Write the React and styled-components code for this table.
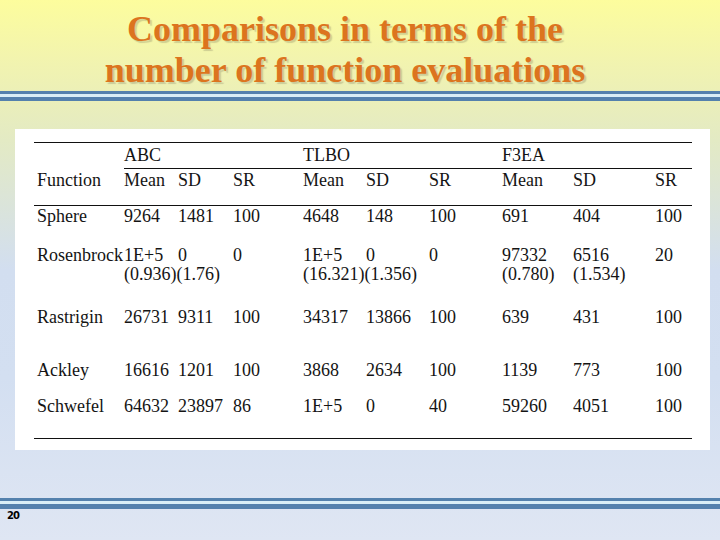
import React from "react";
import styled, { createGlobalStyle } from "styled-components";

const GlobalStyle = createGlobalStyle`
  html, body {
    margin: 0;
    padding: 0;
  }
  body {
    font-family: "Liberation Serif", "Times New Roman", serif;
  }
`;

const columns = "90px 54px 55px 70px 63px 63px 73px 71px 82px 37px";

const groups = ["ABC", "TLBO", "F3EA"];
const stats = ["Mean", "SD", "SR"];

const rows = [
    { name: "Sphere", height: 39, values: ["9264", "1481", "100", "4648", "148", "100", "691", "404", "100"] },
    {
        name: "Rosenbrock",
        height: 62,
        values: ["1E+5", "0", "0", "1E+5", "0", "0", "97332", "6516", "20"],
        extra: ["(0.936)(1.76)", "", "", "(16.321)(1.356)", "", "", "(0.780)", "(1.534)", ""],
    },
    { name: "Rastrigin", height: 53, values: ["26731", "9311", "100", "34317", "13866", "100", "639", "431", "100"] },
    { name: "Ackley", height: 36, values: ["16616", "1201", "100", "3868", "2634", "100", "1139", "773", "100"] },
    { name: "Schwefel", height: 41, values: ["64632", "23897", "86", "1E+5", "0", "40", "59260", "4051", "100"] },
];

const App = () => {
    return (
        <>
            <GlobalStyle />
            <Slide>
                <Header>
                    <Title>
                        Comparisons in terms of the
                        <br />
                        number of function evaluations
                    </Title>
                </Header>
                <Rule $top={3} $bottom={4} />

                <Panel>
                    <Table>
                        <GroupRow>
                            <Cell />
                            {groups.map((g) => (
                                <Cell key={g} $span={3}>{g}</Cell>
                            ))}
                        </GroupRow>
                        <HeadRow>
                            <Cell $first $pad={3}>Function</Cell>
                            {groups.map((g) =>
                                stats.map((s) => (
                                    <Cell key={g + s} $ruled $pad={2}>{s}</Cell>
                                ))
                            )}
                        </HeadRow>
                        <Body>
                            {rows.map((row) => (
                                <Row key={row.name} $height={row.height}>
                                    <Cell $first>{row.name}</Cell>
                                    {row.values.map((v, i) => (
                                        <Cell key={i}>
                                            <Line>{v}</Line>
                                            {row.extra && row.extra[i] && <Line>{row.extra[i]}</Line>}
                                        </Cell>
                                    ))}
                                </Row>
                            ))}
                        </Body>
                    </Table>
                </Panel>

                <Footer>
                    <Rule $top={3} $bottom={5} />
                    <PageNumber>20</PageNumber>
                </Footer>
            </Slide>
        </>
    );
};

const Slide = styled.div`
    width: 720px;
    height: 540px;
    overflow: hidden;
    display: flex;
    flex-direction: column;
    background: linear-gradient(
        to bottom,
        #fdfd9d 0%,
        #f1f3b0 12%,
        #e3eac4 26%,
        #d2def0 50%,
        #d3dff1 70%,
        #dfe6f3 100%
    );
`;

const Header = styled.header`
    height: 91px;
    padding-right: 30px;
    display: flex;
    justify-content: center;
    box-sizing: border-box;
`;

const Title = styled.h1`
    margin: 0;
    padding-top: 9px;
    font-family: "Liberation Serif", "Times New Roman", serif;
    font-size: 36px;
    line-height: 41px;
    font-weight: bold;
    text-align: center;
    color: #dc741e;
    text-shadow: 2px 2px 1px rgba(120, 115, 90, 0.3);
`;

const Rule = styled.div`
    height: ${(p) => p.$top + p.$bottom + 3}px;
    box-sizing: border-box;
    border-top: ${(p) => p.$top}px solid #5481ad;
    border-bottom: ${(p) => p.$bottom}px solid #5481ad;
    background: #d9eef6;
`;

const Panel = styled.main`
    margin: 28px 10px 0 15px;
    height: 321px;
    background: #ffffff;
    padding: 13px 18px 0 19px;
    box-sizing: border-box;
`;

const Table = styled.div`
    color: #141414;
    font-family: "Liberation Serif", "Times New Roman", serif;
    font-size: 18px;
    line-height: 19px;
`;

const GroupRow = styled.div`
    display: grid;
    grid-template-columns: ${columns};
    height: 26px;
    box-sizing: border-box;
    border-top: 1px solid #111;
    padding-top: 3px;
`;

const HeadRow = styled.div`
    display: grid;
    grid-template-columns: ${columns};
    height: 37px;
`;

const Body = styled.div`
    border-top: 1px solid #111;
    border-bottom: 1px solid #111;
    padding-top: 1px;
`;

const Row = styled.div`
    display: grid;
    grid-template-columns: ${columns};
    height: ${(p) => p.$height}px;
`;

const Cell = styled.div`
    grid-column: span ${(p) => p.$span || 1};
    padding-left: ${(p) => (p.$first ? 3 : 0)}px;
    padding-top: ${(p) => p.$pad || 0}px;
    border-top: ${(p) => (p.$ruled ? "1px solid #111" : "none")};
    white-space: nowrap;
`;

const Line = styled.div`
    white-space: nowrap;
`;

const Footer = styled.footer`
    margin-top: 48px;
`;

const PageNumber = styled.div`
    padding: 1px 0 0 7px;
    font-family: "DejaVu Sans", sans-serif;
    font-weight: bold;
    font-size: 10px;
    letter-spacing: -1px;
    color: #000;
`;

export default App;
